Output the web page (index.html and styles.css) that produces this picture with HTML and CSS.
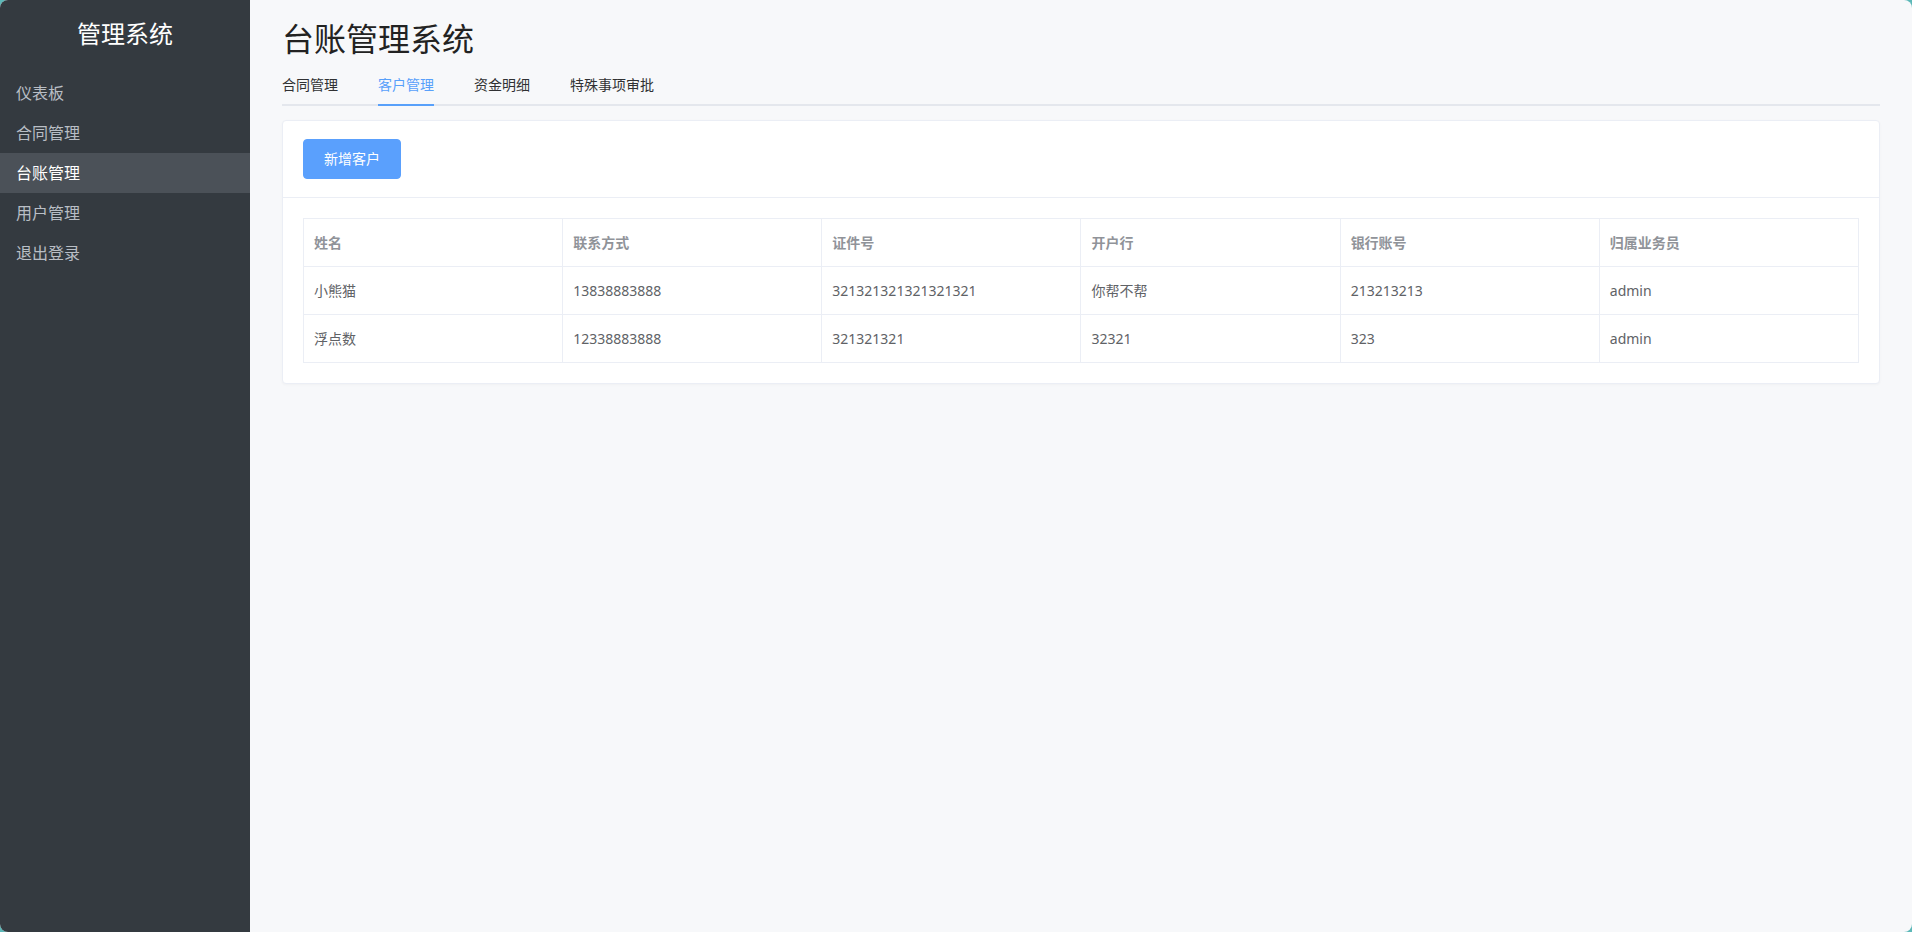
FILE: index.html
```html
<!DOCTYPE html>
<html lang="zh-CN">

<head>
    <meta charset="UTF-8">
    <meta name="viewport" content="width=device-width, initial-scale=1.0">
    <title>台账管理系统</title>
    <link rel="stylesheet" href="styles.css">
</head>

<body>

    <!-- 侧边栏 -->
    <div class="sidebar">
        <div class="sidebar-title">管理系统</div>
        <ul class="menu">
            <li class="menu-item">仪表板</li>
            <li class="menu-item">合同管理</li>
            <li class="menu-item active">台账管理</li>
            <li class="menu-item">用户管理</li>
            <li class="menu-item">退出登录</li>
        </ul>
    </div>

    <!-- 主体 -->
    <div class="main">
        <h1 class="page-title">台账管理系统</h1>

        <div class="tabs">
            <div class="tab"><span>合同管理</span></div>
            <div class="tab active"><span>客户管理</span></div>
            <div class="tab"><span>资金明细</span></div>
            <div class="tab"><span>特殊事项审批</span></div>
        </div>

        <div class="card">
            <div class="card-header">
                <button class="btn-primary">新增客户</button>
            </div>
            <div class="card-body">
                <table class="data-table">
                    <thead>
                        <tr>
                            <th>姓名</th>
                            <th>联系方式</th>
                            <th>证件号</th>
                            <th>开户行</th>
                            <th>银行账号</th>
                            <th>归属业务员</th>
                        </tr>
                    </thead>
                    <tbody>
                        <tr>
                            <td>小熊猫</td>
                            <td>13838883888</td>
                            <td>321321321321321321</td>
                            <td>你帮不帮</td>
                            <td>213213213</td>
                            <td>admin</td>
                        </tr>
                        <tr>
                            <td>浮点数</td>
                            <td>12338883888</td>
                            <td>321321321</td>
                            <td>32321</td>
                            <td>323</td>
                            <td>admin</td>
                        </tr>
                    </tbody>
                </table>
            </div>
        </div>
    </div>

</body>

</html>
```

FILE: styles.css
```css
html {
    background-color: #5cb8b8;
}

body {
    font-family: "Noto Sans", "Noto Sans CJK SC", sans-serif;
    margin: 0;
    padding: 0;
    height: 100vh;
    display: flex;
    border-radius: 8px;
    overflow: hidden;
    background-color: #f7f8fa;
}

.sidebar {
    width: 250px;
    flex-shrink: 0;
    background-color: #343a40;
}

.sidebar-title {
    padding: 18px 0 23px;
    line-height: 32px;
    font-size: 24px;
    color: #fff;
    text-align: center;
}

.menu {
    list-style: none;
    margin: 0;
    padding: 0;
}

.menu-item {
    height: 40px;
    line-height: 40px;
    padding-left: 16px;
    font-size: 16px;
    color: #b9bec5;
    cursor: pointer;
}

.menu-item.active {
    background-color: #4b5158;
    color: #fff;
}

.main {
    flex: 1;
    padding: 0 32px;
}

.page-title {
    margin: 15px 0 3px;
    font-size: 32px;
    line-height: 48px;
    font-weight: normal;
    color: #222;
}

.tabs {
    display: flex;
    gap: 40px;
    height: 40px;
    box-shadow: inset 0 -2px 0 #e4e7ed;
}

.tab span {
    display: block;
    line-height: 38px;
    border-bottom: 2px solid transparent;
    font-size: 14px;
    color: #303133;
    cursor: pointer;
}

.tab.active span {
    color: #58a0fa;
    border-bottom-color: #58a0fa;
}

.card {
    margin-top: 14px;
    background-color: #fff;
    border: 1px solid #ebeef5;
    border-radius: 4px;
    box-shadow: 0 1px 3px rgba(0, 0, 0, 0.03);
}

.card-header {
    padding: 18px 20px;
    border-bottom: 1px solid #ebeef5;
}

.btn-primary {
    padding: 12px 20px;
    font-family: inherit;
    font-size: 14px;
    line-height: 14px;
    color: #fff;
    background-color: #5aa0fd;
    border: 1px solid #5aa0fd;
    border-radius: 4px;
    cursor: pointer;
}

.card-body {
    padding: 20px;
}

.data-table {
    width: 100%;
    border-collapse: collapse;
    table-layout: fixed;
    font-size: 14px;
}

.data-table th,
.data-table td {
    padding: 12px 10px;
    line-height: 23px;
    border: 1px solid #ebeef5;
    text-align: left;
}

.data-table th {
    color: #909399;
    font-weight: bold;
}

.data-table td {
    color: #606266;
}
```
